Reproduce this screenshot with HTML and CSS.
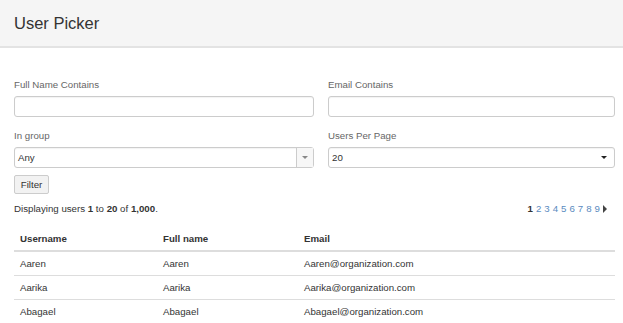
FILE: index.html
```html
<!DOCTYPE html>
<html lang="en">
  <head>
    <meta charset="UTF-8" />
    <title>User Picker</title>
    <link rel="stylesheet" href="styles.css">
  </head>
  <body>
    <div class="page-header">
      <h1 class="page-title">User Picker</h1>
    </div>

    <div class="content">
      <form class="filter-form">
        <div class="form-grid">
          <div class="field">
            <label class="field-label">Full Name Contains</label>
            <div class="text-input"></div>
          </div>
          <div class="field">
            <label class="field-label">Email Contains</label>
            <div class="text-input"></div>
          </div>
          <div class="field">
            <label class="field-label">In group</label>
            <div class="select-box group-select">
              <span class="select-value">Any</span>
              <span class="select-toggle"><span class="caret"></span></span>
            </div>
          </div>
          <div class="field">
            <label class="field-label">Users Per Page</label>
            <div class="select-box native-select">
              <span class="select-value">20</span>
              <span class="caret dark"></span>
            </div>
          </div>
        </div>
        <button type="button" class="filter-button">Filter</button>
      </form>

      <div class="results-bar">
        <div class="results-count">Displaying users <b>1</b> to <b>20</b> of <b>1,000</b>.</div>
        <div class="pagination">
          <b class="current">1</b>
          <a>2</a><a>3</a><a>4</a><a>5</a><a>6</a><a>7</a><a>8</a><a>9</a>
          <span class="next"></span>
        </div>
      </div>

      <table class="user-table">
        <thead>
          <tr>
            <th class="col-user">Username</th>
            <th class="col-name">Full name</th>
            <th>Email</th>
          </tr>
        </thead>
        <tbody>
          <tr><td>Aaren</td><td>Aaren</td><td>Aaren@organization.com</td></tr>
          <tr><td>Aarika</td><td>Aarika</td><td>Aarika@organization.com</td></tr>
          <tr><td>Abagael</td><td>Abagael</td><td>Abagael@organization.com</td></tr>
        </tbody>
      </table>
    </div>
  </body>
</html>
```

FILE: styles.css
```css
/* Page base */
body {
  margin: 0;
  font-family: "Liberation Sans", Arial, sans-serif;
  font-size: 9.7px;
  color: #333;
  background: #fff;
  overflow: hidden;
}

.page-header {
  height: 46px;
  background-color: #f5f5f5;
  border-bottom: 2px solid #e3e3e3;
  display: flex;
  align-items: center;
  padding-left: 14px;
}

.page-title {
  margin: 0;
  font-size: 16.5px;
  font-weight: normal;
  color: #333;
  padding-top: 1px;
}

.content {
  padding: 0 8px 0 14px;
}

/* Filter form */
.filter-form {
  padding-top: 31px;
}

.form-grid {
  display: grid;
  grid-template-columns: 300px 1fr;
  column-gap: 14px;
  row-gap: 13px;
}

.field-label {
  display: block;
  color: #666;
  margin-bottom: 5px;
  line-height: 12px;
}

.text-input,
.select-box {
  height: 21px;
  border: 1px solid #ccc;
  border-radius: 3px;
  box-sizing: border-box;
  box-shadow: inset 0 1px 1px rgba(0, 0, 0, 0.05);
}

.select-box {
  display: flex;
  align-items: center;
  justify-content: space-between;
  padding-left: 3px;
}

.select-value {
  color: #333;
}

.select-toggle {
  align-self: stretch;
  width: 16px;
  border-left: 1px solid #ccc;
  display: flex;
  align-items: center;
  justify-content: center;
  background: #f7f7f7;
}

.caret {
  width: 0;
  height: 0;
  border-left: 3px solid transparent;
  border-right: 3px solid transparent;
  border-top: 3px solid #888;
}

.native-select {
  padding: 0 7px 0 3px;
}

.caret.dark {
  border-top-color: #222;
}

.filter-button {
  display: block;
  margin-top: 7px;
  height: 19px;
  width: 35px;
  padding: 0;
  font: inherit;
  color: #333;
  background-color: #f2f2f2;
  border: 1px solid #ccc;
  border-radius: 2px;
}

/* Results summary and pagination */
.results-bar {
  display: flex;
  justify-content: space-between;
  align-items: center;
  margin-top: 9px;
  padding-right: 8px;
  line-height: 12px;
}

.pagination {
  display: flex;
  align-items: center;
  gap: 3px;
}

.pagination a {
  color: #5a8bc0;
}

.pagination .current {
  color: #333;
}

.next {
  width: 0;
  height: 0;
  border-top: 4px solid transparent;
  border-bottom: 4px solid transparent;
  border-left: 4px solid #444;
}

/* User table */
.user-table {
  width: 100%;
  margin-top: 12px;
  border-collapse: collapse;
}

.user-table th,
.user-table td {
  text-align: left;
  padding: 0 6px;
  line-height: 12px;
}

.user-table th {
  font-weight: bold;
  border-bottom: 2px solid #ddd;
  height: 23px;
}

.user-table td {
  border-top: 1px solid #ddd;
  height: 23px;
}

.col-user {
  width: 131px;
}

.col-name {
  width: 129px;
}
```
